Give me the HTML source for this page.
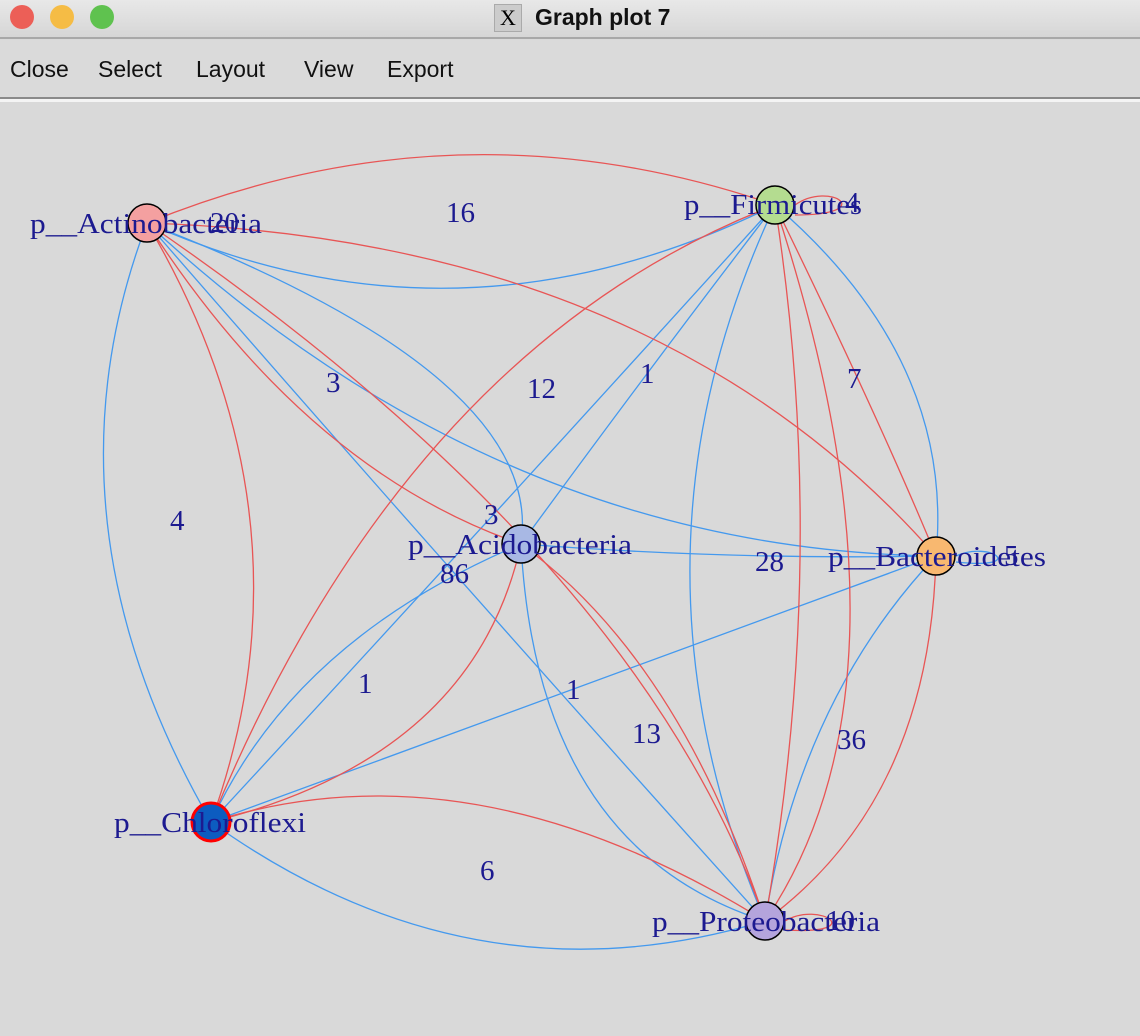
<!DOCTYPE html>
<html><head><style>
body{margin:0;width:1140px;height:1036px;background:#d9d9d9;overflow:hidden;font-family:"Liberation Sans",sans-serif}
.title{position:absolute;left:0;top:0;width:1140px;height:37px;background:linear-gradient(#e8e8e8,#d6d6d6);border-bottom:2px solid #a8a8a8}
.dot{position:absolute;top:5px;width:24px;height:24px;border-radius:50%}
.menu{position:absolute;top:40px;left:0;width:1140px;height:57px;background:#dadada;border-bottom:2px solid #8a8a8a;box-shadow:0 3px 0 #f4f4f4}
.menu span{position:absolute;top:16px;font-size:23px;color:#111}
svg text{font-family:"Liberation Serif",serif;font-size:29px;fill:#1c1a90}
</style></head><body>
<div class="title">
<div class="dot" style="left:10px;background:#ec5f57"></div>
<div class="dot" style="left:50px;background:#f5bc45"></div>
<div class="dot" style="left:90px;background:#5fc24f"></div>
<div style="position:absolute;left:494px;top:4px;width:26px;height:26px;background:#ccc;border:1px solid #aaa;font:22px 'Liberation Serif';text-align:center;line-height:26px">X</div>
<div style="position:absolute;left:535px;top:4px;font-weight:bold;font-size:23px;color:#111">Graph plot 7</div>
</div>
<div class="menu"><span style="left:10px">Close</span><span style="left:98px">Select</span><span style="left:196px">Layout</span><span style="left:304px">View</span><span style="left:387px">Export</span></div>
<svg style="position:absolute;left:0;top:0" width="1140" height="1036" fill="none" stroke-width="1.3">
<g stroke="#4499ee">
<path d="M147 223 Q459 362 775 205"/>
<path d="M147 223 Q35 518 211 822"/>
<path d="M147 223 Q440 560 765 921"/>
<path d="M147 223 Q546 377 521 544"/>
<path d="M147 223 Q499 550 936 556"/>
<path d="M775 205 Q955 360 936 556"/>
<path d="M775 205 Q652 365 521 544"/>
<path d="M775 205 Q490 520 211 822"/>
<path d="M775 205 Q610 557 765 921"/>
<path d="M521 544 Q294 640 211 822"/>
<path d="M521 544 Q537 848 765 921"/>
<path d="M521 544 Q730 560 936 556"/>
<path d="M211 822 Q573 689 936 556"/>
<path d="M936 556 Q800 700 765 921"/>
<path d="M211 822 Q472 1009 765 921"/>
</g>
<g stroke="#e85555">
<path d="M147 223 Q459 96 775 205"/>
<path d="M147 223 Q321 518 211 822"/>
<path d="M147 223 Q640 560 765 921"/>
<path d="M147 223 Q306 470 521 544"/>
<path d="M147 223 Q659 240 936 556"/>
<path d="M775 205 Q880 420 936 556"/>
<path d="M775 205 Q407 347 211 822"/>
<path d="M775 205 Q830 557 765 921"/>
<path d="M775 205 Q930 677 765 921"/>
<path d="M521 544 Q474 757 211 822"/>
<path d="M521 544 Q680 660 765 921"/>
<path d="M936 556 Q930 800 765 921"/>
<path d="M211 822 Q472 739 765 921"/>
<path d="M795 205 C830 180 880 215 795 215"/>
<path d="M785 921 C820 900 870 935 785 930"/>
</g>
<path stroke="#4499ee" d="M956 556 C990 540 1030 570 956 562"/>
<g stroke="#000" stroke-width="1.5">
<circle cx="147" cy="223" r="19" fill="#f4a0a0"/>
<circle cx="775" cy="205" r="19" fill="#b4dc90"/>
<circle cx="521" cy="544" r="19" fill="#a8b8e4"/>
<circle cx="936" cy="556" r="19" fill="#f8b870"/>
<circle cx="765" cy="921" r="19" fill="#b4a4dc"/>
</g>
<circle cx="211" cy="822" r="19" fill="#0c5cc0" stroke="#f00" stroke-width="3"/>
<text x="30" y="233" textLength="232" lengthAdjust="spacingAndGlyphs">p__Actinobacteria</text>
<text x="684" y="214" textLength="178" lengthAdjust="spacingAndGlyphs">p__Firmicutes</text>
<text x="408" y="554" textLength="224" lengthAdjust="spacingAndGlyphs">p__Acidobacteria</text>
<text x="828" y="566" textLength="218" lengthAdjust="spacingAndGlyphs">p__Bacteroidetes</text>
<text x="114" y="832" textLength="192" lengthAdjust="spacingAndGlyphs">p__Chloroflexi</text>
<text x="652" y="931" textLength="228" lengthAdjust="spacingAndGlyphs">p__Proteobacteria</text>
<text x="210" y="232">20</text>
<text x="446" y="222">16</text>
<text x="845" y="212">4</text>
<text x="326" y="392">3</text>
<text x="527" y="398">12</text>
<text x="640" y="383">1</text>
<text x="847" y="388">7</text>
<text x="170" y="530">4</text>
<text x="484" y="524">3</text>
<text x="440" y="583">86</text>
<text x="755" y="571">28</text>
<text x="1004" y="565">5</text>
<text x="358" y="693">1</text>
<text x="566" y="699">1</text>
<text x="632" y="743">13</text>
<text x="837" y="749">36</text>
<text x="480" y="880">6</text>
<text x="826" y="930">10</text>
</svg>
</body></html>
